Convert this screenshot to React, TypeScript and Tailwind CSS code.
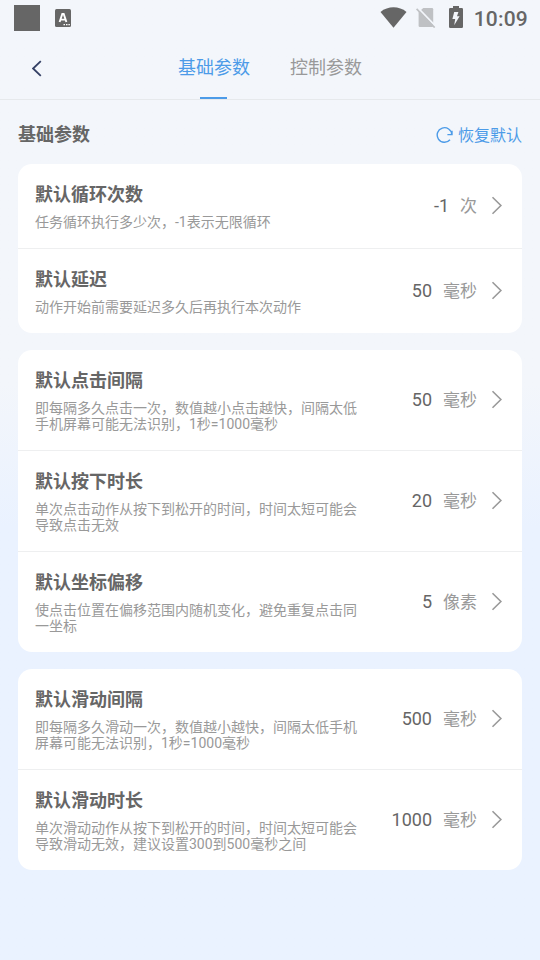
import { useState } from "react";

type Param = {
  title: string;
  desc: string;
  value: number;
  unit: string;
};

const groups: Param[][] = [
  [
    { title: "默认循环次数", desc: "任务循环执行多少次，-1表示无限循环", value: -1, unit: "次" },
    { title: "默认延迟", desc: "动作开始前需要延迟多久后再执行本次动作", value: 50, unit: "毫秒" },
  ],
  [
    {
      title: "默认点击间隔",
      desc: "即每隔多久点击一次，数值越小点击越快，间隔太低手机屏幕可能无法识别，1秒=1000毫秒",
      value: 50,
      unit: "毫秒",
    },
    {
      title: "默认按下时长",
      desc: "单次点击动作从按下到松开的时间，时间太短可能会导致点击无效",
      value: 20,
      unit: "毫秒",
    },
    {
      title: "默认坐标偏移",
      desc: "使点击位置在偏移范围内随机变化，避免重复点击同一坐标",
      value: 5,
      unit: "像素",
    },
  ],
  [
    {
      title: "默认滑动间隔",
      desc: "即每隔多久滑动一次，数值越小越快，间隔太低手机屏幕可能无法识别，1秒=1000毫秒",
      value: 500,
      unit: "毫秒",
    },
    {
      title: "默认滑动时长",
      desc: "单次滑动动作从按下到松开的时间，时间太短可能会导致滑动无效，建议设置300到500毫秒之间",
      value: 1000,
      unit: "毫秒",
    },
  ],
];

const tabs = ["基础参数", "控制参数"];

function StatusBar() {
  return (
    <div className="flex h-9 items-center justify-between pr-3 pl-3.5 text-[#666]">
      <div className="flex items-center gap-[15px]">
        <div className="size-[26px] bg-[#666]" />
        <svg width="16" height="18" viewBox="0 0 16 18">
          <rect width="16" height="18" rx="1.5" fill="#666" />
          <path d="M4.6 13 7.3 5h1.4l2.7 8M5.7 10.6h4.6" fill="none" stroke="#fff" strokeWidth="1.9" />
          <path d="M8.5 15h1.5v1.3H8.5zM11 15h1.5v1.3H11zM13.4 15h1.5v1.3h-1.5z" fill="#fff" />
        </svg>
      </div>
      <div className="flex items-center">
        <div className="flex items-center pb-0.5">
          <svg width="27" height="22" viewBox="0 0 27 22">
            <path d="M.5 6C8-.2 19-.2 26.5 6L13.5 21.8z" fill="#666" />
          </svg>
          <svg className="ml-[9px]" width="20" height="22" viewBox="0 0 20 22">
            <path d="M7.3 2H16q1.2 0 1.2 1.2v16.6q0 1.2-1.2 1.2H3.8q-1.2 0-1.2-1.2V6.3z" fill="#bfc1c4" />
            <path d="M1.6 1.6 20 20.6" stroke="#f3f6fb" strokeWidth="2" />
            <path d="M.6 2.9 18.7 21.6" stroke="#bfc1c4" strokeWidth="1.6" />
          </svg>
          <svg className="ml-[13px]" width="14" height="22" viewBox="0 0 14 22">
            <path d="M4 0h6v2h2.8q1.2 0 1.2 1.2v17.6q0 1.2-1.2 1.2H1.2Q0 22 0 20.8V3.2Q0 2 1.2 2H4z" fill="#666" />
            <path d="M5.2 6H9.4L8 10.3h2.6L5.2 19.2 6.2 13H3.4z" fill="#f3f6fb" />
          </svg>
        </div>
        <span className="mt-0.5 ml-[11px] text-[21px] leading-6 font-medium tracking-[0.2px]">
          10:09
        </span>
      </div>
    </div>
  );
}

function ParamRow({ title, desc, value, unit }: Param) {
  return (
    <div className="flex items-center justify-between px-[17px] pt-[19px] pb-[18px]">
      <div className="w-[324px]">
        <h3 className="text-lg leading-6 font-bold text-[#666]">{title}</h3>
        <p className="mt-[7px] text-sm leading-4 text-[#999]">{desc}</p>
      </div>
      <div className="flex items-center pb-px">
        <span className="text-lg leading-6 text-[#666]">{value}</span>
        <span className="ml-[11px] text-[17px] leading-6 text-[#999]">{unit}</span>
        <svg className="mr-[3px] mb-px ml-3.5" width="11" height="19" viewBox="0 0 11 19">
          <path d="M1.5 1.3 9.9 9.5 1.5 17.7" fill="none" stroke="#999" strokeWidth="1.6" />
        </svg>
      </div>
    </div>
  );
}

export default function App() {
  const [activeTab, setActiveTab] = useState(0);

  return (
    <main
      lang="zh-CN"
      className="h-[960px] w-full max-w-[540px] bg-linear-to-b from-[#f3f6fb] from-40% to-[#eaf2ff] to-55% font-['Roboto','Noto_Sans_CJK_SC',sans-serif]"
    >
      <StatusBar />

      <header className="relative flex h-16 justify-center border-b border-[#e6e9ec]">
        <button className="absolute top-6 left-8" aria-label="返回">
          <svg width="10" height="17" viewBox="0 0 10 17">
            <path d="M8.8 1.2 1.1 8.5 8.8 15.8" fill="none" stroke="#344065" strokeWidth="1.8" />
          </svg>
        </button>
        <nav className="flex gap-10">
          {tabs.map((tab, i) => (
            <button
              key={tab}
              onClick={() => setActiveTab(i)}
              className={`flex flex-col items-center text-lg leading-6 ${
                i === activeTab ? "text-[#4c9be8]" : "text-[#999]"
              }`}
            >
              <span className="mt-5">{tab}</span>
              {i === activeTab && <span className="mt-[17px] mr-px h-0.5 w-[27px] bg-[#4c9be8]" />}
            </button>
          ))}
        </nav>
      </header>

      <section className="px-[18px]">
        <div className="flex h-16 items-center justify-between pt-1.5">
          <h2 className="text-lg leading-6 font-bold text-[#666]">基础参数</h2>
          <button className="flex items-center gap-1 text-base leading-6 text-[#4c9be8]">
            <svg width="18" height="18" viewBox="0 0 18 18">
              <path
                d="M14 13.8A7.3 7.3 0 1 1 15.8 8.6M11.4 8.6h4.6V4.8"
                fill="none"
                stroke="#4c9be8"
                strokeWidth="1.4"
              />
            </svg>
            <span className="pt-0.5">恢复默认</span>
          </button>
        </div>

        <div className="flex flex-col gap-[17px]">
          {groups.map((group) => (
            <div
              key={group[0].title}
              className="divide-y divide-[#eeeff0] rounded-[14px] bg-white"
            >
              {group.map((param) => (
                <ParamRow key={param.title} {...param} />
              ))}
            </div>
          ))}
        </div>
      </section>
    </main>
  );
}
